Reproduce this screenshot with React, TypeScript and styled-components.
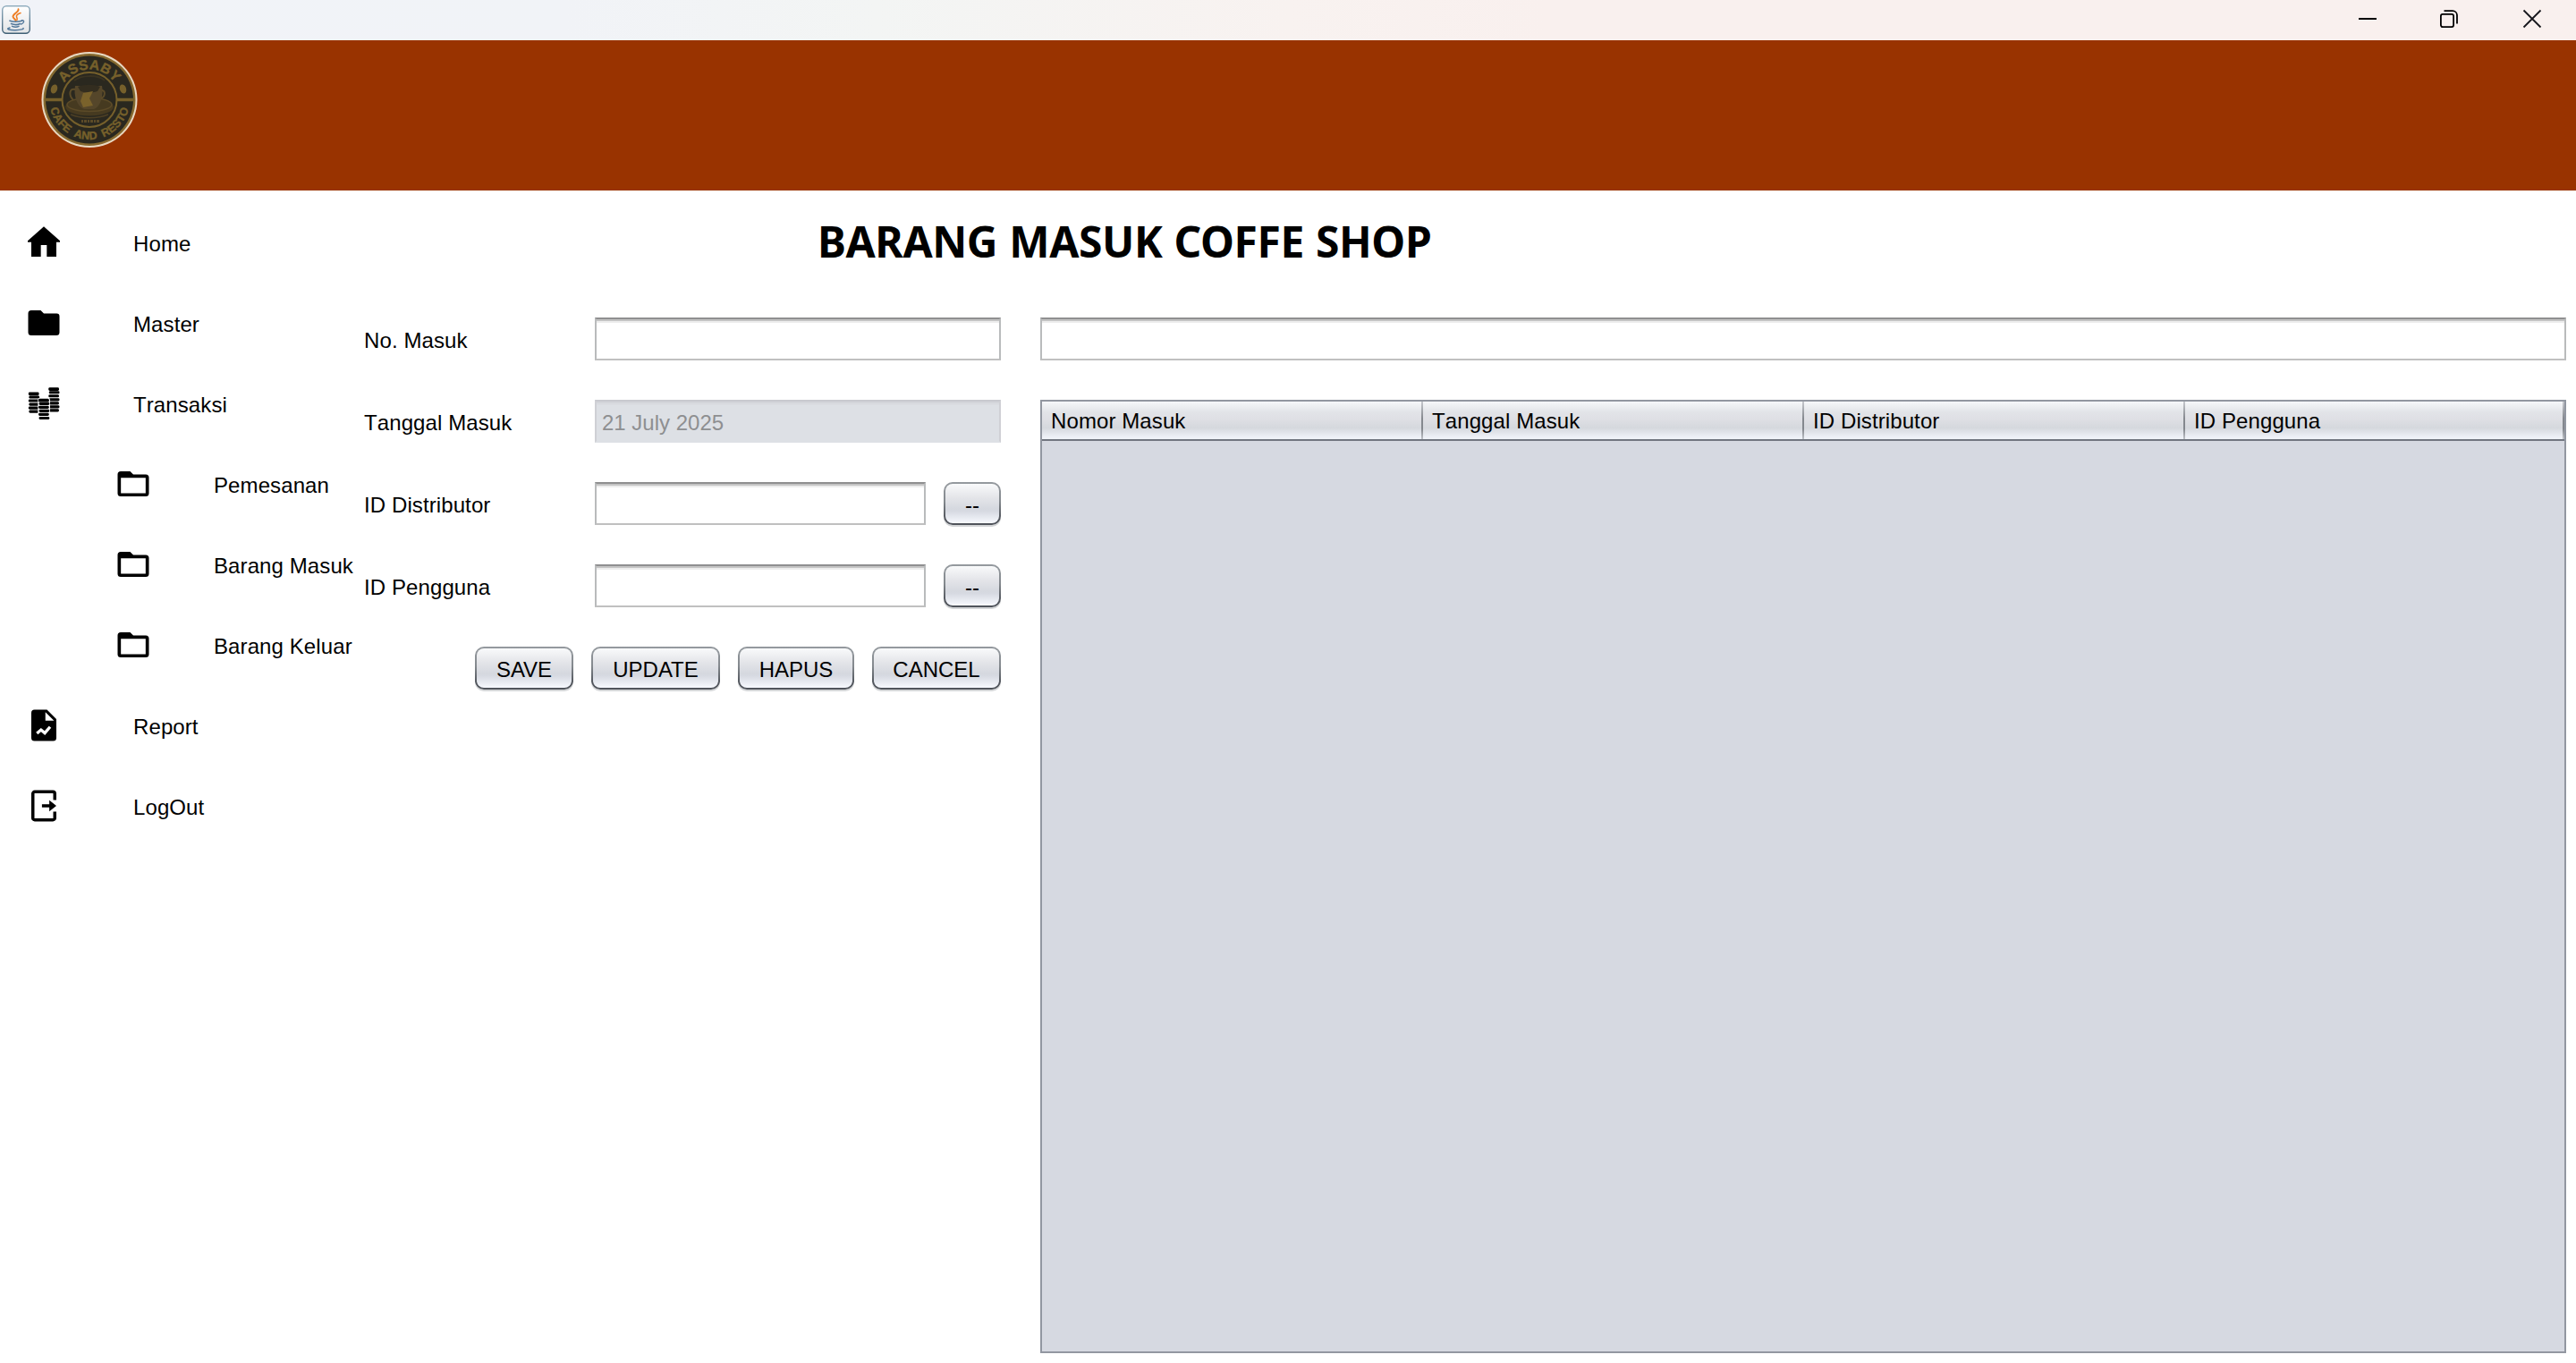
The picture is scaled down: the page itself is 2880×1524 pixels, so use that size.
import React from "react";
import styled, { createGlobalStyle, css } from "styled-components";

const GlobalStyle = createGlobalStyle`
  * { box-sizing: border-box; }
  html, body { margin: 0; background: #ffffff; }
  body, button, input {
    font-family: "Liberation Sans", Arial, sans-serif;
    font-size: 24px;
    color: #000000;
  }
`;

const Window = styled.div`
  width: 2880px;
  height: 1524px;
  display: flex;
  flex-direction: column;
  overflow: hidden;
  background: #ffffff;
  font-kerning: none;
  letter-spacing: 0.1px;
`;

const TitleBar = styled.header`
  height: 45px;
  flex: none;
  display: flex;
  align-items: flex-start;
  justify-content: space-between;
  background: linear-gradient(90deg, #f1f3f8 0%, #f1f3f7 22%, #f3f5f4 34%, #f8f2f0 50%, #f9f0ee 60%, #f9f0ee 100%);
`;

const AppIcon = styled.svg`
  margin: 6px 0 0 2px;
  display: block;
`;

const Controls = styled.div`
  display: flex;
  gap: 71px;
  padding: 10px 38px 0 0;
`;

const ControlIcon = styled.svg`
  display: block;

  &:first-child {
    margin-right: -2px;
  }
`;

const Banner = styled.div`
  height: 168px;
  flex: none;
  padding: 11px 0 0 45px;
  background: #993300;
`;

const Body = styled.div`
  flex: 1;
  min-height: 0;
  display: flex;
`;

const Sidebar = styled.nav`
  width: 407px;
  flex: none;
  padding-top: 13px;
`;

const MenuItem = styled.div<{ $nested?: boolean }>`
  height: 90px;
  display: flex;
  align-items: center;
  gap: ${(p) => (p.$nested ? 69 : 79)}px;
  padding-left: ${(p) => (p.$nested ? 128 : 28)}px;
`;

const MenuIcon = styled.svg`
  width: 42px;
  height: 42px;
  flex: none;
  display: block;
`;

const MenuText = styled.span`
  padding-top: 3px;
  line-height: 28px;
  white-space: nowrap;
`;

const Main = styled.main`
  flex: 1;
  min-width: 0;
  display: flex;
  flex-direction: column;
  padding: 0 11px 11px 0;
`;

const Heading = styled.h1`
  margin: 0;
  height: 142px;
  flex: none;
  padding: 24px 0 0 507px;
  font-family: "Noto Sans", "Open Sans", sans-serif;
  font-weight: 700;
  font-size: 48px;
  line-height: 66px;
  letter-spacing: -0.4px;
  word-spacing: 1px;
  font-kerning: normal;
  white-space: nowrap;
`;

const Columns = styled.div`
  flex: 1;
  min-height: 0;
  display: flex;
  gap: 44px;
`;

const Form = styled.form`
  width: 712px;
  flex: none;
  display: flex;
  flex-direction: column;
  gap: 44px;
`;

const FormRow = styled.div`
  display: flex;
  height: 48px;
`;

const Label = styled.label`
  width: 258px;
  flex: none;
  line-height: 48px;
  padding-top: 2px;
`;

const Field = styled.input`
  flex: 1;
  min-width: 0;
  width: 100%;
  height: 48px;
  padding: 3px 6px 0;
  margin: 0;
  border: 2px solid #b9bbbc;
  border-top-color: #8f8f90;
  border-bottom-color: #c0c0c0;
  border-radius: 0;
  outline: none;
  background: linear-gradient(180deg, #c4c4c4 0 2px, #ededed 2px 4px, #ffffff 4px);
  background-clip: padding-box;

  &:disabled {
    color: #8e8f91;
    border-color: #cfd0d5;
    border-top-color: #c8c9cf;
    border-bottom-color: #dde0e5;
    background: linear-gradient(180deg, #d3d5da 0 2px, #dadce1 2px 4px, #dde0e5 4px);
  }
`;

const buttonFace = css`
  border: 2px solid transparent;
  border-radius: 10px;
  background:
    linear-gradient(180deg, #f9fafb 0%, #e4e5e9 35%, #d5d8df 64%, #d7dae2 70%, #f7f9fe 100%) padding-box,
    linear-gradient(180deg, #959a9f 0%, #84898e 45%, #50545b 85%, #50545b 100%) border-box;
  box-shadow: 0 2px 0 #d3d5d7;
`;

const Button = styled.button<{ $width: number }>`
  width: ${(p) => p.$width}px;
  height: 48px;
  flex: none;
  padding: 3px 0 0;
  line-height: 28px;
  text-align: center;
  ${buttonFace}
`;

const PickButton = styled(Button)`
  margin-left: 20px;
`;

const Actions = styled.div`
  display: flex;
  justify-content: flex-end;
  gap: 20px;
`;

const DataPanel = styled.section`
  flex: 1;
  min-width: 0;
  display: flex;
  flex-direction: column;
  gap: 44px;
`;

const SearchRow = styled.div`
  display: flex;
  flex: none;
`;

const Table = styled.div`
  flex: 1;
  min-height: 0;
  border: 2px solid #9297a1;
  background: #d6d9e1;
`;

const TableHead = styled.div`
  height: 44px;
  display: grid;
  grid-template-columns: 426px 426px 426px 1fr;
  border-bottom: 2px solid #717680;
  background: linear-gradient(180deg, #f6f7fa 0%, #e2e4e8 28%, #dedfe4 48%, #d5d8dd 70%, #eef1f7 95%, #f0f3f8 100%);
`;

const HeadCell = styled.div`
  padding: 1px 0 0 10px;
  line-height: 41px;
  border: 0 solid transparent;
  border-right-width: 2px;
  border-image: linear-gradient(180deg, #c9cbd0 0%, #85898f 45%, #83878d 72%, #c5c8cd 100%) 1;
`;

const JavaIcon = () => (
  <AppIcon width="32" height="32" viewBox="0 0 32 32">
    <defs>
      <linearGradient id="javaEdge" x1="0" y1="0" x2="0" y2="1">
        <stop offset="0" stopColor="#93afc0" />
        <stop offset="1" stopColor="#3f5f75" />
      </linearGradient>
      <linearGradient id="javaFace" x1="0" y1="0" x2="0" y2="1">
        <stop offset="0" stopColor="#ffffff" />
        <stop offset="1" stopColor="#e2e4e6" />
      </linearGradient>
    </defs>
    <rect x="0.7" y="0.7" width="30.6" height="30.6" rx="4.5" fill="url(#javaFace)" stroke="url(#javaEdge)" strokeWidth="1.4" />
    <g fill="none" stroke="#ee7d22" strokeLinecap="round">
      <path d="M18.5 4.2c1 3.2-6 5-6 8.3 0 2 2.6 2.8 3 4.500" strokeWidth="1.9" />
      <path d="M21 8.5c-2.8 1-5 2.5-4.500 4.300.4 1.400 1.400 2 .3 3.700" strokeWidth="1.5" />
    </g>
    <g fill="none" stroke="#54799b" strokeLinecap="round">
      <path d="M9 17.2c3 1.3 10 1.3 13.5 0" strokeWidth="1.6" />
      <path d="M22.5 16.8c3-.8 2.8 3.2-.8 4.2" strokeWidth="1.4" />
      <path d="M10.5 20.5c3 1.200 7.500 1.200 10 0" strokeWidth="1.6" />
      <path d="M11.500 23.400c2.500 1 5.500 1 7.500 0" strokeWidth="1.500" />
      <path d="M9 25c-6 1.500.5 2.900 6.500 2.700 6-.1 9.500-1.200 8.500-2.200" strokeWidth="1.400" />
    </g>
  </AppIcon>
);

const LogoSvg = styled.svg`
  display: block;
  letter-spacing: 0;
`;

const Logo = () => (
  <LogoSvg width="110" height="110" viewBox="0 0 110 110">
    <defs>
      <path id="arcTop" d="M21.500 55a33.500 33.500 0 0 1 67 0" />
      <path id="arcBottom" d="M10 55a45 45 0 0 0 90 0" />
    </defs>
    <circle cx="55" cy="55.500" r="53.500" fill="#e9d9c3" />
    <circle cx="55" cy="55.500" r="51.500" fill="#85692f" />
    <circle cx="55" cy="55.500" r="49" fill="#2a281f" />
    <path d="M5 55.500H24M86 55.500H105" stroke="#76602b" strokeWidth="3.600" />
    <circle cx="55" cy="55.500" r="30.500" fill="#2a281f" stroke="#76602b" strokeWidth="2" />
    <g fill="#76602b" stroke="#76602b" strokeWidth="0.400" fontFamily="Liberation Sans, Arial, sans-serif" fontWeight="700" textAnchor="middle">
      <text fontSize="15.500" letterSpacing="0.300">
        <textPath href="#arcTop" startOffset="50%">ASSABY</textPath>
      </text>
      <text fontSize="12.500" letterSpacing="0.200" wordSpacing="3">
        <textPath href="#arcBottom" startOffset="50%">CAFE AND RESTO</textPath>
      </text>
    </g>
    <g fill="#76602b">
      <ellipse cx="15.500" cy="43.500" rx="3.600" ry="5.200" transform="rotate(18 15.500 43.500)" />
      <ellipse cx="92.500" cy="43.500" rx="3.600" ry="5.200" transform="rotate(-18 92.500 43.500)" />
    </g>
    <ellipse cx="55" cy="63.500" rx="27" ry="10" fill="#463a20" />
    <ellipse cx="55" cy="61" rx="25" ry="7.500" fill="none" stroke="#5c4b28" strokeWidth="1.500" />
    <path d="M39 40h30c2 10-1 23-9 26H49c-8-3-12-15-10-26z" fill="#55462a" />
    <path d="M42 41c8-3 18-3 25 0l-3 5c-7 2-13 2-19 0z" fill="#332d1f" />
    <path d="M48 48l11-2-4 8 4 8-11 2-3-7z" fill="#7a622b" />
    <path d="M39 44c-6-2-8 6-2 12M69 45c4 0 4 7-1 9" fill="none" stroke="#5c4b28" strokeWidth="2" />
    <path d="M34 72c12 5 30 5 42 0" fill="none" stroke="#4c3f24" strokeWidth="1.500" />
    <path d="M38 34c8-6 26-7 34 0" fill="none" stroke="#3a3321" strokeWidth="2" />
    <path d="M46 79.500h20" stroke="#5c4b28" strokeWidth="3" strokeDasharray="2 1 3 1" />
  </LogoSvg>
);

const stack = (x: number, top: number, count: number) => (
  <g key={x}>
    <rect x={x - 0.4} y={top - 0.4} width="7.8" height={count * 2.3 + 0.5} rx="1.2" fill="#ffffff" />
    {Array.from({ length: count }, (_, i) => (
      <rect key={i} x={x + (i % 2 ? 0.3 : 0)} y={top + i * 2.3} width="6.7" height={i === 0 ? 2.2 : 1.8} rx="0.8" />
    ))}
  </g>
);

type IconName = "home" | "master" | "coins" | "folder" | "report" | "logout";

const drawings: Record<IconName, React.ReactNode> = {
  home: <path d="M12 1.900 22.300 11v.9H20v9.200h-6.100v-7.400h-3.800v7.400H4v-9.200H1.700V11z" />,
  master: <path d="M4 4h6l2 2h8.200a1.800 1.800 0 0 1 1.800 1.800V18a2 2 0 0 1-2 2H4a2 2 0 0 1-2-2V6a2 2 0 0 1 2-2z" />,
  coins: (
    <>
      {stack(2.2, 4.8, 6)}
      {stack(15, 1.8, 7)}
      {stack(8.6, 9, 6)}
    </>
  ),
  folder: (
    <path
      fillRule="evenodd"
      d="M4 4h6l2 2h8a2 2 0 0 1 2 2v10a2 2 0 0 1-2 2H4a2 2 0 0 1-2-2V6a2 2 0 0 1 2-2zM4.100 8.100V18H19.900V8.100z"
    />
  ),
  report: (
    <>
      <path fillRule="evenodd" d="M6 2h8l6 6v12a2 2 0 0 1-2 2H6a2 2 0 0 1-2-2V4a2 2 0 0 1 2-2zM13 3.500V9h5.500z" />
      <path d="M7.600 17.200 10.200 14.900l2.400 2 3.400-3.900" fill="none" stroke="#ffffff" strokeWidth="1.900" />
    </>
  ),
  logout: (
    <>
      <path d="M19 8.300V4.200a1.200 1.200 0 0 0-1.200-1.200H6.200A1.200 1.200 0 0 0 5 4.200v15.600a1.200 1.200 0 0 0 1.200 1.200h11.600a1.200 1.200 0 0 0 1.200-1.200v-4.100" fill="none" stroke="#000000" strokeWidth="2" />
      <path d="M10.800 11h4.700V8.400L20 12l-4.500 3.600V13h-4.700z" />
    </>
  ),
};

const menu: { icon: IconName; text: string; nested?: boolean }[] = [
  { icon: "home", text: "Home" },
  { icon: "master", text: "Master" },
  { icon: "coins", text: "Transaksi" },
  { icon: "folder", text: "Pemesanan", nested: true },
  { icon: "folder", text: "Barang Masuk", nested: true },
  { icon: "folder", text: "Barang Keluar", nested: true },
  { icon: "report", text: "Report" },
  { icon: "logout", text: "LogOut" },
];

const columns = ["Nomor Masuk", "Tanggal Masuk", "ID Distributor", "ID Pengguna"];

export default function App() {
  return (
    <Window>
      <GlobalStyle />
      <TitleBar>
        <JavaIcon />
        <Controls>
          <ControlIcon width="22" height="22" viewBox="0 0 22 22">
            <path d="M1 11h20" stroke="#000000" strokeWidth="2" />
          </ControlIcon>
          <ControlIcon width="22" height="22" viewBox="0 0 22 22" fill="none" stroke="#000000" strokeWidth="1.800">
            <rect x="1.900" y="5.900" width="14.200" height="14.200" rx="2" />
            <path d="M5.500 2.100H15a5 5 0 0 1 5 5v9.500" />
          </ControlIcon>
          <ControlIcon width="22" height="22" viewBox="0 0 22 22">
            <path d="M1.500 1.500l19 19M20.500 1.500l-19 19" stroke="#16161c" strokeWidth="1.800" />
          </ControlIcon>
        </Controls>
      </TitleBar>
      <Banner>
        <Logo />
      </Banner>
      <Body>
        <Sidebar>
          {menu.map((m) => (
            <MenuItem key={m.text} $nested={m.nested}>
              <MenuIcon viewBox="0 0 24 24">{drawings[m.icon]}</MenuIcon>
              <MenuText>{m.text}</MenuText>
            </MenuItem>
          ))}
        </Sidebar>
        <Main>
          <Heading>BARANG MASUK COFFE SHOP</Heading>
          <Columns>
            <Form onSubmit={(e) => e.preventDefault()}>
              <FormRow>
                <Label htmlFor="no">No. Masuk</Label>
                <Field id="no" />
              </FormRow>
              <FormRow>
                <Label htmlFor="tanggal">Tanggal Masuk</Label>
                <Field id="tanggal" disabled defaultValue="21 July 2025" />
              </FormRow>
              <FormRow>
                <Label htmlFor="distributor">ID Distributor</Label>
                <Field id="distributor" />
                <PickButton type="button" $width={64}>--</PickButton>
              </FormRow>
              <FormRow>
                <Label htmlFor="pengguna">ID Pengguna</Label>
                <Field id="pengguna" />
                <PickButton type="button" $width={64}>--</PickButton>
              </FormRow>
              <Actions>
                <Button type="button" $width={110}>SAVE</Button>
                <Button type="button" $width={144}>UPDATE</Button>
                <Button type="button" $width={130}>HAPUS</Button>
                <Button type="button" $width={144}>CANCEL</Button>
              </Actions>
            </Form>
            <DataPanel>
              <SearchRow>
                <Field aria-label="Cari" />
              </SearchRow>
              <Table>
                <TableHead>
                  {columns.map((c) => (
                    <HeadCell key={c}>{c}</HeadCell>
                  ))}
                </TableHead>
              </Table>
            </DataPanel>
          </Columns>
        </Main>
      </Body>
    </Window>
  );
}
